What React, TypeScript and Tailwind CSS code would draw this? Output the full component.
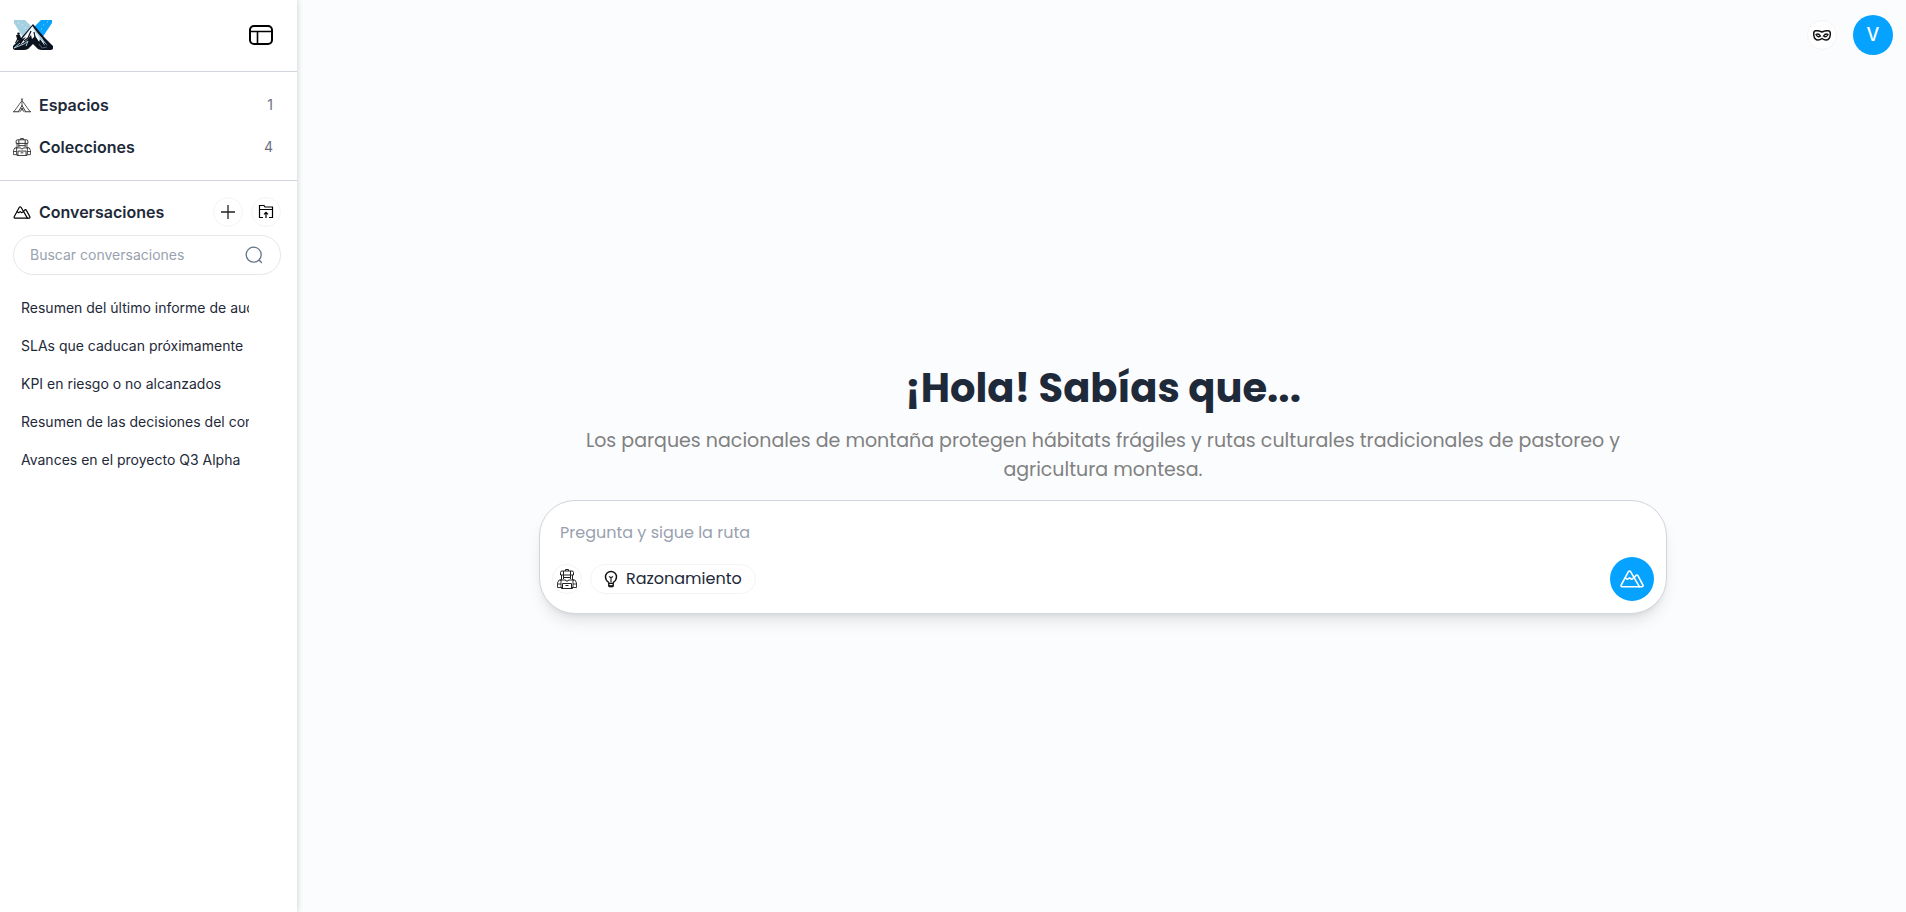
import type { ReactNode } from 'react'

const CONVERSATIONS = [
  'Resumen del último informe de auditoría',
  'SLAs que caducan próximamente',
  'KPI en riesgo o no alcanzados',
  'Resumen de las decisiones del comité',
  'Avances en el proyecto Q3 Alpha',
]

const SECTIONS = [
  { id: 'spaces', label: 'Espacios', count: 1, icon: <TentIcon /> },
  { id: 'collections', label: 'Colecciones', count: 4, icon: <BackpackIcon className="size-[18px]" /> },
]

function Logo() {
  return (
    <svg viewBox="0 0 40 30" className="h-[30px] w-10" aria-hidden="true">
      <path d="M1 0h11l8 8-9 11L1 3z" fill="#a5d0e2" />
      <path d="M39 0H28l-8 8 9 10L39 3z" fill="#0aa2fb" />
      <path d="M5 3h1M9 5h1M12 8h1" stroke="#e3f4fa" />
      <path d="M30 5h1M28 9h1M34 2h1" stroke="#8fd6ff" />
      <path d="M20 4L8 18 0 26q-1 3 2 4h9q4 0 6-3l3-3 3 3q2 3 6 3h9q3-1 2-4l-9-9z" fill="#0c131f" />
      <path d="M19.500 6L9 19l4-2-6 8 7-5 4-5 1 4 3-3 4 6 1-3 5 7-3-8-5-5z" fill="#f4f9fb" />
      <path d="M20 7l2 5 3 3 2 4 8 7-7-9z" fill="#9cc9dc" />
      <path d="M18 11l-3 7-4 3M21 12l1 5 4 6" stroke="#0c131f" strokeWidth="1.200" fill="none" />
      <path d="M7 23l-6 5 10-4 4-3-2 5" stroke="#a9cbd8" strokeWidth="1" fill="none" />
      <path d="M26 24l3 4 5-1" stroke="#607884" strokeWidth=".8" fill="none" />
      <circle cx="5.500" cy="13.800" r="1.300" fill="#0c131f" />
      <path d="M3 15h4l1 3 1 4H7l-2-2-2 3H2l2-4z" fill="#0c131f" />
    </svg>
  )
}

function PanelIcon() {
  return (
    <svg viewBox="0 0 24 20" className="h-5 w-6" fill="none" stroke="#000" strokeWidth="2" aria-hidden="true">
      <rect x="1" y="1" width="22" height="18" rx="4" />
      <path d="M1 6.500h22M8.500 6.500V19" strokeWidth="1.600" />
    </svg>
  )
}

function TentIcon() {
  return (
    <svg viewBox="0 0 18 18" className="size-[18px]" fill="none" stroke="#333" strokeWidth=".8" aria-hidden="true">
      <path d="M8.300 2.500l.7 2 .7-2M9 4.500L1 15.500M9 4.500l8 11M9 5v5" />
      <path d="M9 9.500L5.500 15.500M9 9.500l3.500 6M9 12l-1.500 3.500M9 12l1.500 3.500" strokeWidth="1" />
      <path d="M0 15.700h6.500M11.500 15.700H18" strokeWidth="1.100" />
    </svg>
  )
}

function BackpackIcon({ className }: { className: string }) {
  return (
    <svg viewBox="0 0 20 20" className={className} fill="none" stroke="#222" strokeWidth="1" aria-hidden="true">
      <path d="M8.500 2V.5h3V2" />
      <path d="M3.500 6V3.500q0-1.500 1.500-1.500h10q1.500 0 1.500 1.500V6zM6.500 2v4M13.500 2v4" />
      <path d="M4.500 6v5M15.500 6v5M6.500 6v4M13.500 6v4M6.500 8.500h7" />
      <path d="M3 11h5.500l.5 1h2l.5-1H17" />
      <path d="M4 11H2L.5 14v4.500h3.500zM16 11h2l1.500 3v4.500H16zM.5 15H4M16 15h3.500" strokeWidth=".9" />
      <path d="M4.500 18v1.500h11V18M5.500 19V14.500h9V19M8.500 16.500h3" />
    </svg>
  )
}

function MountainsIcon({ className }: { className: string }) {
  return (
    <svg viewBox="0 0 24 18" className={className} fill="none" stroke="currentColor" strokeWidth="1.600" strokeLinejoin="round" strokeLinecap="round" aria-hidden="true">
      <path d="M8.300 1.800Q9.500.2 10.700 1.800L19.500 16.800H2Q.6 16.600 1.200 15z" />
      <path d="M5.400 8l2 1.300 2.100-1.500 2.100 1.500L13.600 8" />
      <path d="M14.200 7.500l1.700-2q1-1 2 .2l5 9.300q.6 1.500-.9 1.800h-2.500" />
    </svg>
  )
}

function PlusIcon() {
  return (
    <svg viewBox="0 0 14 14" className="size-[14px]" stroke="#222" strokeWidth="1.300" aria-hidden="true">
      <path d="M7 0v14M0 7h14" />
    </svg>
  )
}

function FolderUpIcon() {
  return (
    <svg viewBox="0 0 16 16" className="size-4" fill="none" stroke="#000" strokeWidth="1.200" aria-hidden="true">
      <path d="M5 13.500H1.500v-12h4.500l1 1.500h7.500v10.500H11M1.500 5.500h13" />
      <path d="M8 14V8.500M6 10.300l2-2 2 2" />
    </svg>
  )
}

function SearchIcon() {
  return (
    <svg viewBox="0 0 18 18" className="size-[18px]" fill="none" stroke="#64748b" strokeWidth="1.300" strokeLinecap="round" aria-hidden="true">
      <circle cx="8.700" cy="8.700" r="7.500" />
      <path d="M14.200 14.200l2.300 2.300" />
    </svg>
  )
}

function BulbIcon() {
  return (
    <svg viewBox="0 0 14 18" className="h-[18px] w-[14px]" fill="none" stroke="#111" strokeWidth="1.400" aria-hidden="true">
      <path d="M4.800 12.500Q1.500 10.300 1.500 7a5.500 5.500 0 0111 0q0 3.300-3.300 5.500v3.500H4.800z" />
      <path d="M4.800 13.500h4.400M5 6.500l2 1.200 2-1.200M7 7.700v5" strokeWidth="1.100" />
      <path d="M5 16.500h4" strokeWidth="1.600" />
    </svg>
  )
}

function MaskIcon() {
  return (
    <svg viewBox="0 0 18 11" className="h-[11px] w-[18px]" fill="none" stroke="#111" strokeWidth="1.500" aria-hidden="true">
      <path d="M9 2Q5.500.3 2.500.8.400 1.200.7 4.500 1.200 10 5 10q2 0 4-1.500Q11 10 13 10q3.800 0 4.300-5.500.3-3.300-1.800-3.700Q12.500.3 9 2z" />
      <path d="M3 4.500q2.500-1.500 4.500 1.500-2.800 2-4.500-1.500zM15 4.500q-2.500-1.500-4.500 1.500 2.800 2 4.500-1.500z" strokeWidth="1.300" />
    </svg>
  )
}

function RoundButton({ label, children }: { label: string; children: ReactNode }) {
  return (
    <button
      type="button"
      aria-label={label}
      className="flex size-[30px] shrink-0 items-center justify-center rounded-full border border-gray-100 bg-white"
    >
      {children}
    </button>
  )
}

function Sidebar() {
  return (
    <aside className="z-10 flex w-[297px] shrink-0 flex-col bg-white font-['Inter',sans-serif] shadow-[0_0_6px_rgba(0,0,0,0.2)]">
      <div className="flex h-[72px] items-center justify-between border-b border-gray-300 pr-6 pb-px pl-[13px]">
        <Logo />
        <button type="button" aria-label="Contraer panel">
          <PanelIcon />
        </button>
      </div>

      <nav className="flex flex-col gap-[18px] border-b border-gray-300 pt-[21px] pr-6 pb-[21px] pl-[13px]">
        {SECTIONS.map((s) => (
          <a key={s.id} href={`#${s.id}`} className="flex items-center gap-2">
            {s.icon}
            <span className="text-base font-semibold text-gray-800">{s.label}</span>
            <span className="ml-auto text-sm text-gray-500">{s.count}</span>
          </a>
        ))}
      </nav>

      <div className="flex flex-col pt-4 pr-4 pl-[13px]">
        <div className="flex items-center">
          <MountainsIcon className="mr-2 h-[13px] w-[18px] text-black" />
          <h2 className="text-base font-semibold text-gray-800">Conversaciones</h2>
          <div className="ml-auto flex gap-2">
            <RoundButton label="Nueva conversación">
              <PlusIcon />
            </RoundButton>
            <RoundButton label="Nueva carpeta">
              <FolderUpIcon />
            </RoundButton>
          </div>
        </div>

        <label className="mt-2 flex h-10 items-center rounded-full border border-gray-200 pr-[17px] pl-4">
          <input
            type="search"
            aria-label="Buscar conversaciones"
            placeholder="Buscar conversaciones"
            className="min-w-0 flex-1 text-sm outline-none placeholder:text-gray-400"
          />
          <SearchIcon />
        </label>

        <ul className="mt-[14px] pr-8 pl-2">
          {CONVERSATIONS.map((title) => (
            <li key={title} className="flex h-[38px] items-center">
              <a href="#conversacion" className="w-full overflow-hidden text-sm whitespace-nowrap text-gray-800">
                {title}
              </a>
            </li>
          ))}
        </ul>
      </div>
    </aside>
  )
}

function Composer() {
  return (
    <form className="mt-4 flex w-full flex-col rounded-[36px] border border-gray-300 bg-white pt-[17px] pr-3 pb-3 pl-3 shadow-lg">
      <input
        type="text"
        aria-label="Pregunta"
        placeholder="Pregunta y sigue la ruta"
        className="h-7 w-full px-2 text-base outline-none placeholder:text-gray-400"
      />
      <div className="mt-[11px] flex items-center gap-2">
        <RoundButton label="Adjuntar colección">
          <BackpackIcon className="size-5" />
        </RoundButton>
        <button
          type="button"
          className="flex h-[30px] items-center gap-2 rounded-full border border-gray-100 px-[13px] text-base text-gray-800"
        >
          <BulbIcon />
          Razonamiento
        </button>
        <button
          type="submit"
          aria-label="Enviar"
          className="ml-auto flex size-11 items-center justify-center rounded-full bg-[#05a3ff] text-white"
        >
          <MountainsIcon className="h-[18px] w-6" />
        </button>
      </div>
    </form>
  )
}

export default function App() {
  return (
    <div className="flex min-h-screen bg-[#fbfcfe]">
      <Sidebar />
      <div className="flex flex-1 flex-col pl-[3px] font-['Poppins','Open_Sans',sans-serif]">
        <header className="flex h-[70px] items-center justify-end gap-4 pr-[13px]">
          <RoundButton label="Chat temporal">
            <MaskIcon />
          </RoundButton>
          <button
            type="button"
            aria-label="Cuenta"
            className="flex size-10 items-center justify-center rounded-full bg-[#05a3ff] font-['Inter',sans-serif] text-lg font-medium text-white"
          >
            V
          </button>
        </header>
        <main className="mx-auto flex w-full max-w-[1128px] flex-1 flex-col items-center justify-center">
          <h1 className="text-center text-[40px] leading-10 font-bold text-gray-800">¡Hola! Sabías que...</h1>
          <p className="mt-[18px] px-8 text-center text-[19px] leading-[29px] text-[#808080]">
            Los parques nacionales de montaña protegen hábitats frágiles y rutas culturales tradicionales de pastoreo y
            agricultura montesa.
          </p>
          <Composer />
        </main>
      </div>
    </div>
  )
}
